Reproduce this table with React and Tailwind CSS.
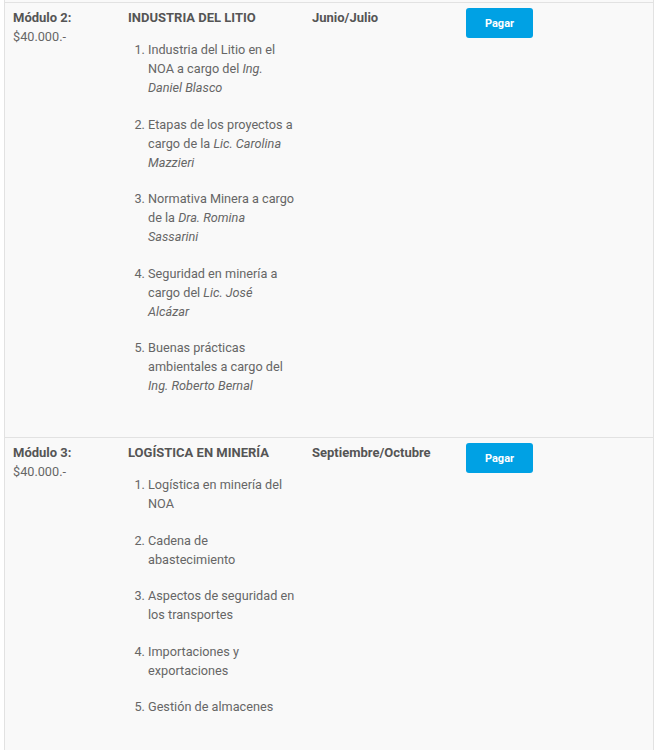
const modules = [
    {
        name: 'Módulo 2:',
        price: '$40.000.-',
        title: 'INDUSTRIA DEL LITIO',
        period: 'Junio/Julio',
        items: [
            <>Industria del Litio en el NOA a cargo del <em>Ing. Daniel Blasco</em></>,
            <>Etapas de los proyectos a cargo de la <em>Lic. Carolina Mazzieri</em></>,
            <>Normativa Minera a cargo de la <em>Dra. Romina Sassarini</em></>,
            <>Seguridad en minería a cargo del <em>Lic. José Alcázar</em></>,
            <>Buenas prácticas ambientales a cargo del <em>Ing. Roberto Bernal</em></>,
        ],
    },
    {
        name: 'Módulo 3:',
        price: '$40.000.-',
        title: 'LOGÍSTICA EN MINERÍA',
        period: 'Septiembre/Octubre',
        items: [
            'Logística en minería del NOA',
            'Cadena de abastecimiento',
            'Aspectos de seguridad en los transportes',
            'Importaciones y exportaciones',
            'Gestión de almacenes',
        ],
    },
]

export default function App() {
    return (
        <div className="min-h-[750px] bg-white pl-1 pr-1 font-['Roboto',sans-serif] text-[12.7px] leading-[19px] text-[#666]">
            <div className="border-x border-[#e2e2e2] bg-[#f9f9f9]">
                <div className="h-[2px]" />
                {modules.map((m) => (
                    <div key={m.name} className="flex border-t border-[#e2e2e2] pt-[5px] pb-[42px]">
                        <div className="w-[115px] shrink-0 pl-[8px]">
                            <p className="text-[13px] font-bold text-[#555]">{m.name}</p>
                            <p>{m.price}</p>
                        </div>
                        <div className="w-[184px] shrink-0 px-[8px]">
                            <p className="text-[13px] font-bold text-[#555]">{m.title}</p>
                            <ol className="mt-[13px] list-decimal pl-[20px] pr-[1px]">
                                {m.items.map((it, i) => (
                                    <li key={i} className="mb-[17.5px] last:mb-0">{it}</li>
                                ))}
                            </ol>
                        </div>
                        <div className="w-[154px] shrink-0 px-[8px]">
                            <p className="text-[13px] font-bold text-[#555]">{m.period}</p>
                        </div>
                        <div className="flex-1 px-[8px]">
                            <button className="block h-[30px] w-[67px] rounded-[3px] bg-[#00a1e4] text-[11px] font-bold text-white">
                                Pagar
                            </button>
                        </div>
                    </div>
                ))}
            </div>
        </div>
    )
}
